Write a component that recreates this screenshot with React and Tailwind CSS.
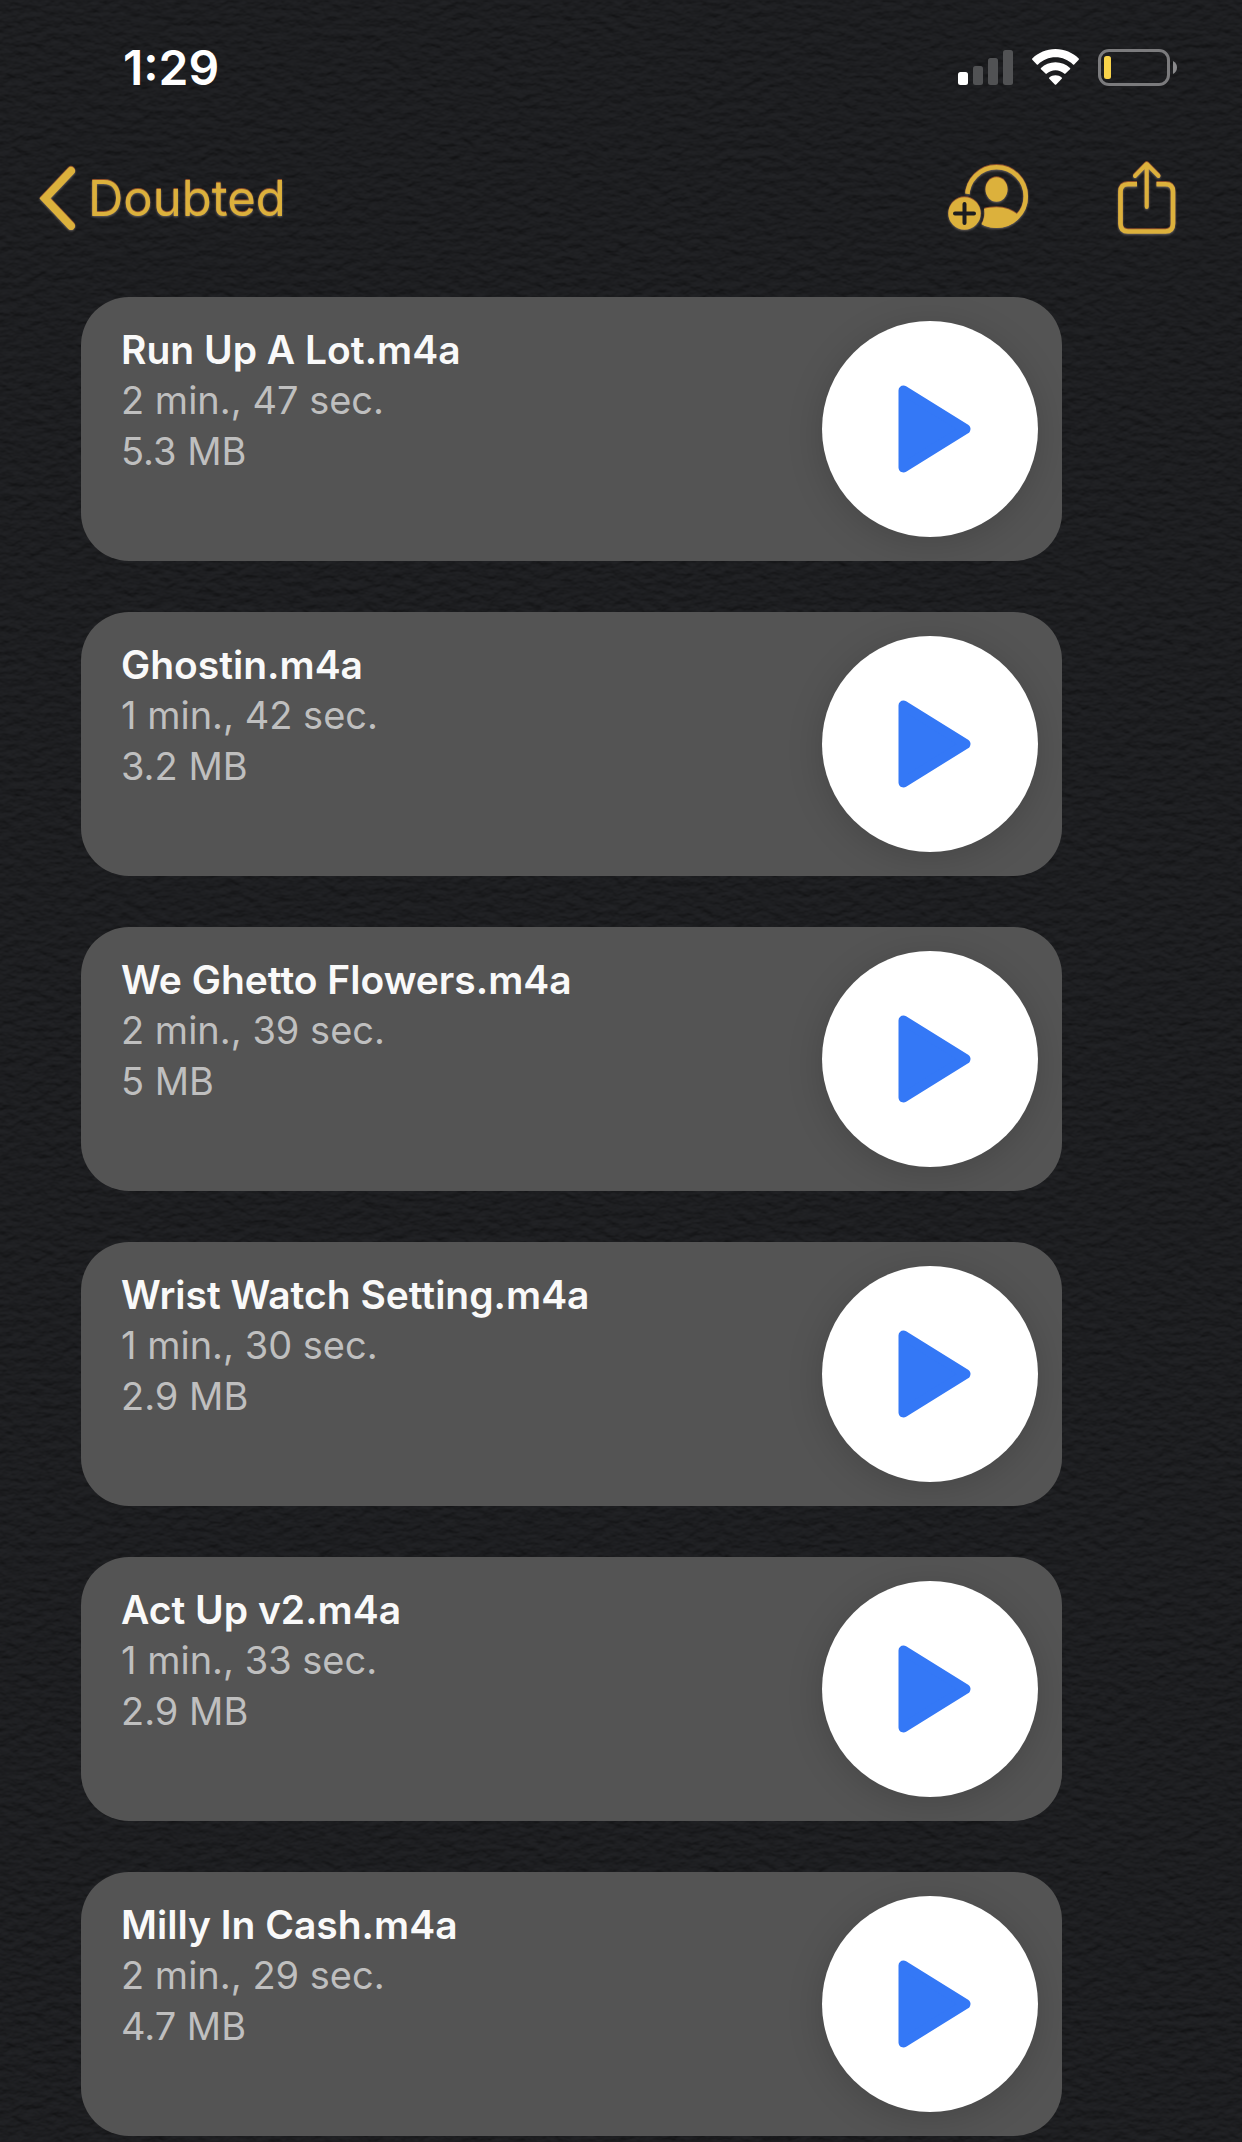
import React, { useState } from 'react';

const recordings = [
  { id: 1, name: 'Run Up A Lot.m4a', length: '2 min., 47 sec.', size: '5.3 MB' },
  { id: 2, name: 'Ghostin.m4a', length: '1 min., 42 sec.', size: '3.2 MB' },
  { id: 3, name: 'We Ghetto Flowers.m4a', length: '2 min., 39 sec.', size: '5 MB' },
  { id: 4, name: 'Wrist Watch Setting.m4a', length: '1 min., 30 sec.', size: '2.9 MB' },
  { id: 5, name: 'Act Up v2.m4a', length: '1 min., 33 sec.', size: '2.9 MB' },
  { id: 6, name: 'Milly In Cash.m4a', length: '2 min., 29 sec.', size: '4.7 MB' },
];

// Dark paper grain behind the note
const PaperTexture = () => (
  <svg className="absolute inset-0 -z-10 h-full w-full" aria-hidden="true">
    <filter id="paper" x="0" y="0" width="100%" height="100%" colorInterpolationFilters="sRGB">
      <feTurbulence type="fractalNoise" baseFrequency="0.08 0.13" numOctaves="3" seed="8" result="noise" />
      <feDiffuseLighting in="noise" surfaceScale="1.4" lightingColor="#222326">
        <feDistantLight azimuth="270" elevation="58" />
      </feDiffuseLighting>
    </filter>
    <rect width="100%" height="100%" filter="url(#paper)" />
  </svg>
);

const SignalIcon = () => (
  <svg width="55" height="37" viewBox="0 0 55 37" fill="#515254" aria-hidden="true">
    <rect x="0" y="23" width="10" height="13" rx="2.5" fill="#fff" />
    <rect x="15" y="17" width="10" height="19" rx="2.5" />
    <rect x="30" y="9" width="10" height="27" rx="2.5" />
    <rect x="45" y="1" width="10" height="35" rx="2.5" />
  </svg>
);

const WifiIcon = () => (
  <svg width="47" height="37" viewBox="0 0 47 37" fill="#fff" aria-hidden="true">
    <path d="M23.500 0C32.500 0 40.700 3.600 46.700 9.400Q47.300 10 46.700 10.700L42.200 15.400Q41.600 16 41 15.400C36.300 11 30.200 8.300 23.500 8.300S10.700 11 6 15.400Q5.400 16 4.800 15.400L.3 10.700Q-.3 10 .3 9.400C6.300 3.600 14.500 0 23.500 0Z" />
    <path d="M23.500 13.200C29.100 13.200 34.200 15.400 38 18.900Q38.700 19.500 38 20.200L33.500 24.600Q32.900 25.200 32.200 24.600C29.900 22.500 26.800 21.200 23.500 21.200S17.100 22.500 14.800 24.600Q14.100 25.200 13.500 24.600L9 20.200Q8.300 19.500 9 18.900C12.800 15.400 17.900 13.200 23.500 13.200Z" />
    <path d="M23.500 26.200C25.800 26.200 28 27 29.700 28.400Q30.400 29 29.700 29.700L24.200 35.500Q23.500 36.200 22.800 35.500L17.300 29.700Q16.600 29 17.300 28.400C19 27 21.200 26.200 23.500 26.200Z" />
  </svg>
);

const BatteryIcon = () => (
  <svg width="79" height="37" viewBox="0 0 79 37" aria-hidden="true">
    <rect x="1.500" y="1.500" width="69" height="34" rx="9.500" fill="none" stroke="#7b7b7d" strokeWidth="3" />
    <path d="M75 12C77.700 13.200 79 15.700 79 18.500S77.700 23.800 75 25Z" fill="#8a8a8c" />
    <rect x="6" y="7" width="7" height="23" rx="2.500" fill="#f8d34a" />
  </svg>
);

const BackIcon = () => (
  <svg width="37" height="64" viewBox="0 0 37 64" fill="none" stroke="currentColor" strokeWidth="8" strokeLinecap="round" strokeLinejoin="miter" aria-hidden="true">
    <path d="M32 5L6 32.500L32 60" />
  </svg>
);

const AddPersonIcon = () => (
  <svg width="82" height="68" viewBox="0 0 82 68" aria-hidden="true">
    <mask id="badge-gap">
      <rect width="82" height="68" fill="#fff" />
      <circle cx="17.500" cy="49.500" r="20" fill="#000" />
    </mask>
    <clipPath id="ring-area">
      <circle cx="49.500" cy="32.500" r="31.500" />
    </clipPath>
    <g mask="url(#badge-gap)">
      <circle cx="49.500" cy="32.500" r="29.300" fill="none" stroke="currentColor" strokeWidth="4.600" />
      <ellipse cx="49.500" cy="25.500" rx="11" ry="12.200" fill="currentColor" />
      <path clipPath="url(#ring-area)" d="M26 51C31 46 40 43.300 49.500 43.300C58 43.300 65.500 46.200 71 51V68H26Z" fill="currentColor" />
    </g>
    <circle cx="17.500" cy="49.500" r="16.200" fill="currentColor" />
    <path d="M17.500 40V59M8 49.500H27" fill="none" stroke="#1c1d1f" strokeWidth="4" strokeLinecap="round" />
  </svg>
);

const ShareIcon = () => (
  <svg width="60" height="76" viewBox="0 0 60 76" fill="none" stroke="currentColor" strokeWidth="4.600" aria-hidden="true">
    <path d="M20 24.300H11Q3.500 24.300 3.500 31.800V64Q3.500 71.500 11 71.500H48.500Q56 71.500 56 64V31.800Q56 24.300 48.500 24.300H39.500" />
    <path d="M29.700 4.500V47M18 16L29.700 4L41.500 16" strokeWidth="4" strokeLinecap="round" strokeLinejoin="round" />
  </svg>
);

const PlayIcon = () => (
  <svg width="74" height="88" viewBox="0 0 74 88" fill="#3478f6" stroke="#3478f6" strokeWidth="10" strokeLinejoin="round" aria-hidden="true">
    <path d="M5.500 5.500L67.500 44L5.500 82.500Z" />
  </svg>
);

const PauseIcon = () => (
  <svg width="74" height="88" viewBox="0 0 74 88" fill="#3478f6" aria-hidden="true">
    <rect x="10" y="4" width="18" height="80" rx="5" />
    <rect x="46" y="4" width="18" height="80" rx="5" />
  </svg>
);

const StatusBar = () => (
  <div className="flex h-[135px] items-center justify-between pr-[65px] pl-[123px] text-white">
    <time className="text-[48px] leading-none font-semibold">1:29</time>
    <div className="flex items-center gap-[19px]">
      <SignalIcon />
      <WifiIcon />
      <BatteryIcon />
    </div>
  </div>
);

// Orange upper edge and pale lower edge press the controls into the paper
const NavBar = () => (
  <nav className="flex h-[126px] items-center justify-between pr-[65px] pl-[39px] text-[#dcb13c] drop-shadow-[0_-1px_0_rgba(190,95,35,0.7)]">
    <a href="#notes" className="flex items-center gap-3 text-[49px] leading-none drop-shadow-[0_1px_1px_rgba(255,255,255,0.3)]">
      <BackIcon />
      Doubted
    </a>
    <div className="flex items-center gap-[88px] drop-shadow-[0_1px_1px_rgba(255,255,255,0.3)]">
      <button type="button" aria-label="Add people">
        <AddPersonIcon />
      </button>
      <button type="button" aria-label="Share">
        <ShareIcon />
      </button>
    </div>
  </nav>
);

const RecordingCard = ({ recording, playing, onToggle }) => (
  <li className="flex items-start justify-between rounded-[48px] bg-[#545454] p-6 pl-10">
    <div className="pt-1 text-[38px] leading-[51px] text-[#bfbfbf]">
      <h2 className="text-[39px] leading-[50px] font-semibold text-[#f9f9f9]">{recording.name}</h2>
      <p>{recording.length}</p>
      <p>{recording.size}</p>
    </div>
    <button
      type="button"
      onClick={onToggle}
      aria-label={playing ? 'Pause' : 'Play'}
      className="flex size-[216px] shrink-0 items-center justify-center rounded-full bg-white pl-2.5 shadow-[0_6px_36px_rgba(0,0,0,0.16)]"
    >
      {playing ? <PauseIcon /> : <PlayIcon />}
    </button>
  </li>
);

function App() {
  const [playingId, setPlayingId] = useState(null);

  const togglePlay = (id) => {
    setPlayingId(playingId === id ? null : id);
  };

  return (
    <div className="relative isolate min-h-screen overflow-hidden bg-[#1c1d1f] font-['Inter','Liberation_Sans',sans-serif]">
      <PaperTexture />
      <header>
        <StatusBar />
        <NavBar />
      </header>
      <main className="pt-9 pr-[180px] pb-1 pl-[81px]">
        <ul className="flex flex-col gap-[51px]">
          {recordings.map((recording) => (
            <RecordingCard
              key={recording.id}
              recording={recording}
              playing={playingId === recording.id}
              onToggle={() => togglePlay(recording.id)}
            />
          ))}
        </ul>
      </main>
    </div>
  );
}

export default App;
